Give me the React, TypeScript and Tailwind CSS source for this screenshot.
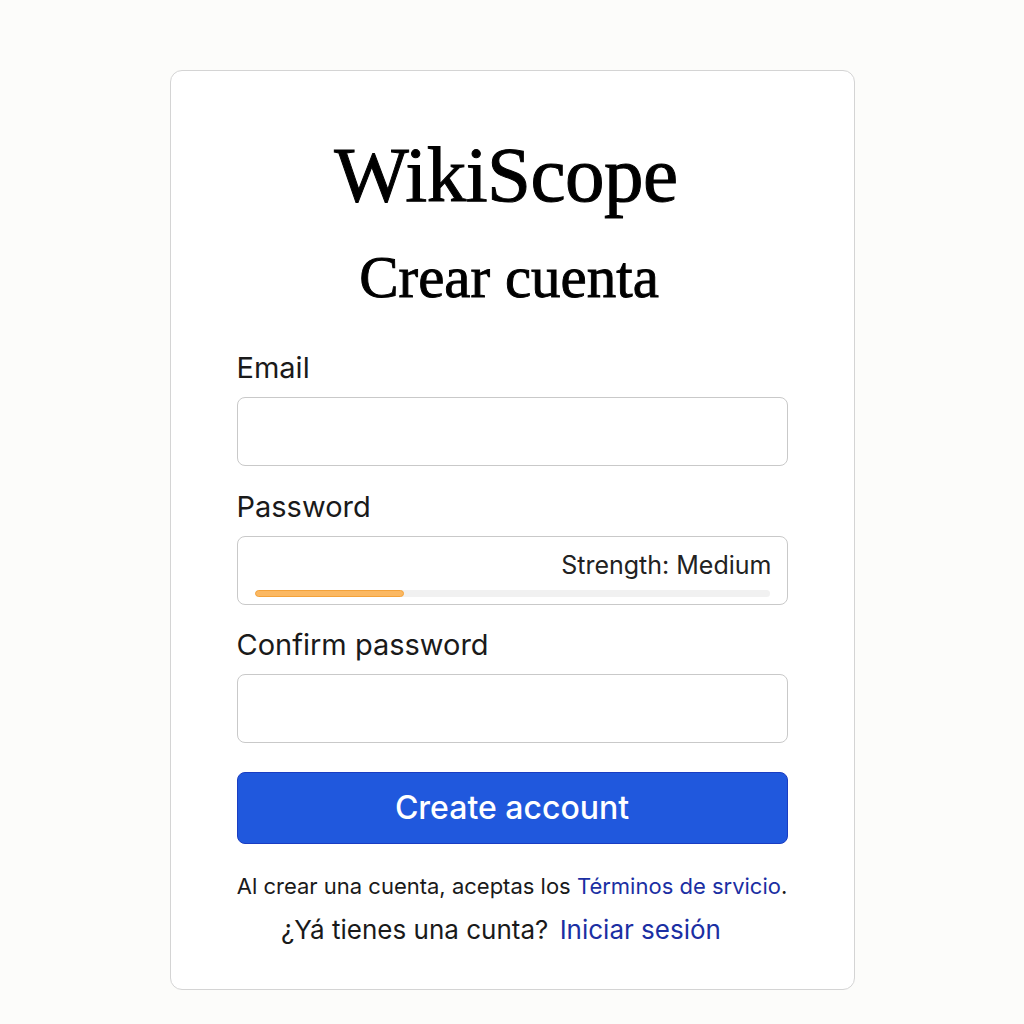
import React from 'react'

const serif = { fontFamily: '"Liberation Serif", "DejaVu Serif", serif' }

export default function App() {
  return (
    <div
      className="min-h-[1024px] w-full bg-[#fcfcfa] flex justify-center pt-[70px]"
      style={{ fontFamily: 'Inter, "Noto Sans", sans-serif' }}
    >
      <div className="w-[685px] h-[920px] bg-white border border-[#d4d4d4] rounded-[12px] flex flex-col px-[66px]">
        {/* Logo */}
        <h1
          className="text-center text-[79px] leading-none text-black mt-[64px] mr-[12px] tracking-[-0.5px] [-webkit-text-stroke:1px_black]"
          style={serif}
        >
          WikiScope
        </h1>
        <h2
          className="text-center text-[59px] leading-none text-black mt-[34px] mr-[6px] [-webkit-text-stroke:0.9px_black]"
          style={serif}
        >
          Crear cuenta
        </h2>

        {/* Form */}
        <label className="text-[29px] leading-none text-[#1a1a1a] mt-[46px]">Email</label>
        <div className="mt-[15px] h-[69px] rounded-[8px] border border-[#c9c9c9] bg-white" />

        <label className="text-[29px] leading-none text-[#1a1a1a] mt-[26px]">Password</label>
        <div className="mt-[15px] h-[69px] rounded-[8px] border border-[#c9c9c9] bg-white flex flex-col px-[17px]">
          <div className="text-right text-[25px] leading-none text-[#222] mt-[16px] -mr-[2px]">
            Strength: Medium
          </div>
          <div className="mt-[12px] h-[7px] rounded-full bg-[#f1f1f1] overflow-hidden">
            <div className="h-full w-[29%] rounded-full bg-[#fbb862] border border-[#f3a23a]" />
          </div>
        </div>

        <label className="text-[29px] leading-none text-[#1a1a1a] mt-[25px]">Confirm password</label>
        <div className="mt-[15px] h-[69px] rounded-[8px] border border-[#c9c9c9] bg-white" />

        <button className="mt-[29px] h-[72px] rounded-[8px] bg-[#2058dd] border border-[#1a3dc2] text-white text-[32px] font-medium">
          Create account
        </button>

        <p className="mt-[31px] text-center text-[22px] leading-none text-[#1a1a1a]">
          Al crear una cuenta, aceptas los{' '}
          <a className="text-[#1b2fa3]">Términos de srvicio</a>.
        </p>
        <p className="mt-[20px] pr-[22px] text-center text-[26px] leading-none text-[#1a1a1a]">
          ¿Yá tienes una cunta?{' '}
          <a className="ml-[4px] text-[#1b2fa3]">Iniciar sesión</a>
        </p>
      </div>
    </div>
  )
}
